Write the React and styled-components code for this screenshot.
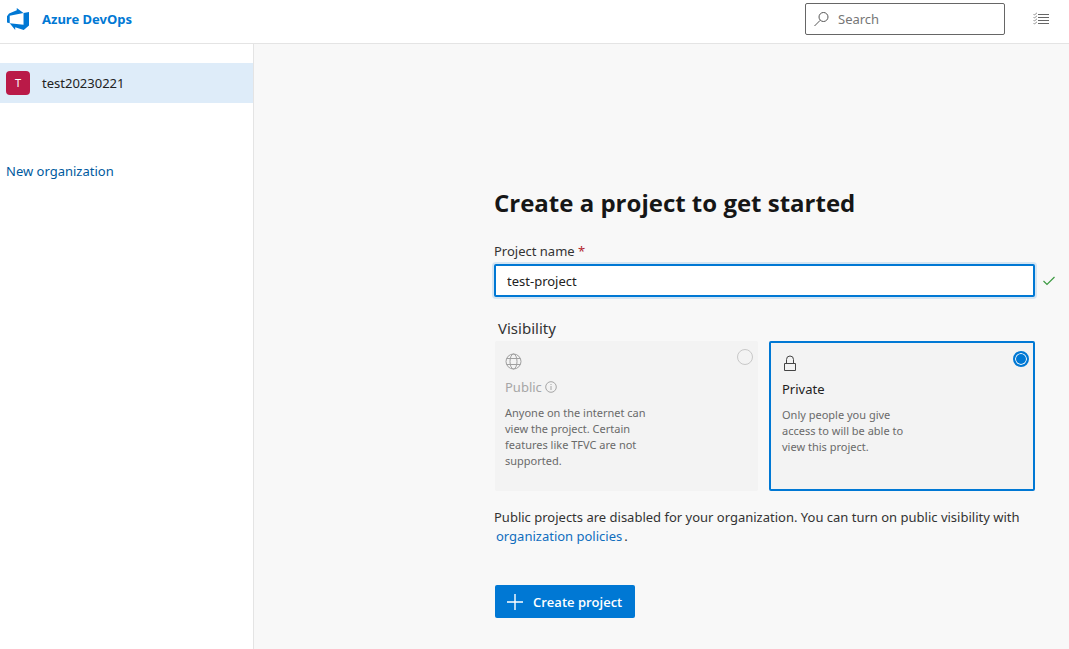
import React, { useState } from "react";
import styled, { createGlobalStyle } from "styled-components";

const GlobalStyle = createGlobalStyle`
  *, *::before, *::after { box-sizing: border-box; }
  body {
    margin: 0;
    background: #f8f8f8;
    color: #222;
    font-family: "Noto Sans", "Open Sans", sans-serif;
    font-size: 13px;
    line-height: 20px;
  }
  input, button { font: inherit; color: inherit; }
  svg { display: block; flex: none; }
`;

const Page = styled.div`
  display: flex;
  flex-direction: column;
  min-height: 100vh;
`;

const Header = styled.header`
  display: flex;
  align-items: center;
  height: 44px;
  padding: 0 19px 5px 7px;
  background: #fff;
  border-bottom: 1px solid #e4e4e4;
`;

const Brand = styled.a`
  display: flex;
  align-items: center;
  gap: 13px;
  margin-right: auto;
  color: #0078d4;
  font-weight: 700;
  text-decoration: none;
`;

const SearchBox = styled.label`
  display: flex;
  align-items: center;
  gap: 8px;
  width: 200px;
  height: 32px;
  margin-right: 28px;
  padding: 0 8px;
  border: 1px solid #666;
  border-radius: 2px;
  background: #fff;
`;

const SearchInput = styled.input`
  flex: 1;
  min-width: 0;
  padding: 0;
  border: 0;
  outline: 0;
  background: none;
  &::placeholder { color: #767676; opacity: 1; }
`;

const IconButton = styled.button`
  padding: 0;
  border: 0;
  background: none;
  color: #666;
`;

const Body = styled.div`
  display: flex;
  flex: 1;
`;

const Sidebar = styled.nav`
  flex: none;
  width: 254px;
  padding-top: 19px;
  background: #fff;
  border-right: 1px solid #e4e4e4;
`;

const OrgLink = styled.a`
  display: flex;
  align-items: center;
  gap: 12px;
  height: 40px;
  padding: 0 6px;
  background: #deecf9;
  color: #222;
  text-decoration: none;
`;

const OrgBadge = styled.span`
  width: 24px;
  height: 24px;
  border-radius: 4px;
  background: #ba1a48;
  color: #fff;
  font-size: 11px;
  line-height: 24px;
  text-align: center;
`;

const NewOrgLink = styled.a`
  display: block;
  margin-top: 58px;
  padding: 0 6px;
  color: #005a9e;
  text-decoration: none;
`;

const Main = styled.main`
  flex: 1;
  padding: 139px 14px 32px 240px;
`;

const Form = styled.form`
  display: flex;
  flex-direction: column;
`;

const Title = styled.h1`
  margin: 0;
  color: #161616;
  font-family: "Open Sans", sans-serif;
  font-size: 24px;
  line-height: 40px;
  font-weight: 700;
`;

const FieldLabel = styled.label`
  margin: 18px 0 3px;
  color: #333;
`;

const Required = styled.span`
  color: #b3262e;
`;

const FieldRow = styled.div`
  display: flex;
  align-items: center;
  gap: 8px;
`;

const TextInput = styled.input`
  flex: 1;
  min-width: 0;
  height: 33px;
  padding: 0 11px;
  border: 2px solid #0078d4;
  border-radius: 2px;
  outline: 0;
  box-shadow: 0 0 0 2px #d5e5f2;
  background: #fff;
`;

const Visibility = styled.fieldset`
  display: grid;
  grid-template-columns: 263fr 266fr;
  gap: 11px;
  margin: 18px 20px 0 0;
  padding: 0 0 0 1px;
  border: 0;
  min-width: 0;
`;

const Legend = styled.legend`
  padding: 0 3px;
  color: #333;
  font-size: 15px;
  line-height: 26px;
`;

const Card = styled.label`
  display: flex;
  justify-content: space-between;
  align-items: flex-start;
  min-height: 150px;
  padding: ${(p) => (p.$selected ? "8px 4px 8px 11px" : "8px 5px 8px 10px")};
  border: ${(p) => (p.$selected ? "2px solid #0078d4" : "0")};
  border-radius: 2px;
  background: #f3f3f3;
`;

const CardText = styled.span`
  display: flex;
  flex-direction: column;
`;

const CardIcon = styled.span`
  display: flex;
  align-items: center;
  height: 24px;
  color: ${(p) => (p.$muted ? "#a0a0a0" : "#444")};
`;

const CardName = styled.span`
  display: flex;
  align-items: center;
  gap: 3px;
  margin: 4px 0 8px;
  color: ${(p) => (p.$muted ? "#a6a6a6" : "#222")};
`;

const CardHint = styled.span`
  width: ${(p) => p.$width};
  color: #6a6a6a;
  font-size: 11px;
  line-height: 16px;
`;

const Radio = styled.input`
  appearance: none;
  flex: none;
  width: 16px;
  height: 16px;
  margin: 0;
  border: 1px solid #c8c8c8;
  border-radius: 50%;
  &:checked {
    border: 2px solid #0078d4;
    background: #0078d4;
    box-shadow: inset 0 0 0 1px #fff;
  }
`;

const Note = styled.p`
  margin: 17px 0 0;
  color: #333;
  line-height: 19px;
`;

const NoteLink = styled.a`
  padding: 0 2px;
  color: #106ebe;
  text-decoration: none;
`;

const CreateButton = styled.button`
  display: flex;
  align-items: center;
  align-self: flex-start;
  gap: 10px;
  height: 33px;
  margin: 39px 0 0 1px;
  padding: 0 13px 0 12px;
  border: 0;
  border-radius: 2px;
  background: #0078d4;
  color: #fff;
  font-family: "Open Sans", sans-serif;
  font-weight: 600;
`;

const line = { fill: "none", stroke: "currentColor" };

const Logo = () => (
  <svg width="22" height="22" viewBox="0 0 24 24" fill="#0078d4" aria-hidden="true">
    <path d="M0 8.877L2.247 5.91l8.405-3.416V.022l7.37 5.393L2.966 8.338v8.225L0 15.707zm24-4.45v14.651l-5.753 4.9-9.303-3.057v3.056l-5.978-7.416 15.057 1.798V5.415z" />
  </svg>
);

const SearchIcon = () => (
  <svg width="16" height="16" viewBox="0 0 16 16" {...line} stroke="#555" aria-hidden="true">
    <circle cx="9.500" cy="6" r="4.500" />
    <path d="M6.200 9.300L.5 15" />
  </svg>
);

const ListIcon = () => (
  <svg width="17" height="14" viewBox="0 0 17 14" {...line} aria-hidden="true">
    <path d="M5 2.500h11M5 5.500h11M5 8.500h11M5 11.500h11" />
    <path
      d="M.5 2l1 1L4 .8M.5 5l1 1L4 3.800M.5 8l1 1L4 6.800M.5 11l1 1L4 9.800"
      strokeWidth=".7"
    />
  </svg>
);

const CheckIcon = () => (
  <svg width="12" height="10" viewBox="0 0 12 10" {...line} stroke="#3c9a42" strokeWidth="1.200" aria-label="Name is available">
    <path d="M.5 5L4 8.500 11.500 1" />
  </svg>
);

const GlobeIcon = () => (
  <svg width="17" height="17" viewBox="0 0 17 17" {...line} aria-hidden="true">
    <circle cx="8.500" cy="8.500" r="7.500" />
    <ellipse cx="8.500" cy="8.500" rx="3.500" ry="7.500" />
    <path d="M1.500 5.500h14M1.500 11.500h14" />
  </svg>
);

const LockIcon = () => (
  <svg width="16" height="17" viewBox="0 0 16 17" {...line} aria-hidden="true">
    <path d="M2.500 8.500h11v7h-11zM4.500 8.500V4.500a3.500 3.500 0 0 1 7 0v4" />
  </svg>
);

const InfoIcon = () => (
  <svg width="12" height="12" viewBox="0 0 12 12" {...line} aria-hidden="true">
    <circle cx="6" cy="6" r="5.300" />
    <path d="M6 5v4M6 3v1" />
  </svg>
);

const PlusIcon = () => (
  <svg width="16" height="16" viewBox="0 0 16 16" {...line} strokeWidth="1.400" aria-hidden="true">
    <path d="M8 0v16M0 8h16" />
  </svg>
);

export default function App() {
  const [name, setName] = useState("test-project");
  return (
    <Page>
      <GlobalStyle />
      <Header>
        <Brand href="#">
          <Logo />
          Azure DevOps
        </Brand>
        <SearchBox>
          <SearchIcon />
          <SearchInput type="search" placeholder="Search" aria-label="Search" />
        </SearchBox>
        <IconButton type="button" aria-label="Work items">
          <ListIcon />
        </IconButton>
      </Header>
      <Body>
        <Sidebar>
          <OrgLink href="#">
            <OrgBadge>T</OrgBadge>
            test20230221
          </OrgLink>
          <NewOrgLink href="#">New organization</NewOrgLink>
        </Sidebar>
        <Main>
          <Form onSubmit={(e) => e.preventDefault()}>
            <Title>Create a project to get started</Title>
            <FieldLabel htmlFor="project-name">
              Project name <Required>*</Required>
            </FieldLabel>
            <FieldRow>
              <TextInput id="project-name" value={name} onChange={(e) => setName(e.target.value)} />
              <CheckIcon />
            </FieldRow>
            <Visibility>
              <Legend>Visibility</Legend>
              <Card>
                <CardText>
                  <CardIcon $muted><GlobeIcon /></CardIcon>
                  <CardName $muted>Public <InfoIcon /></CardName>
                  <CardHint $width="150px">
                    Anyone on the internet can view the project. Certain features like TFVC are not supported.
                  </CardHint>
                </CardText>
                <Radio type="radio" name="visibility" value="public" disabled />
              </Card>
              <Card $selected>
                <CardText>
                  <CardIcon><LockIcon /></CardIcon>
                  <CardName>Private</CardName>
                  <CardHint $width="134px">
                    Only people you give access to will be able to view this project.
                  </CardHint>
                </CardText>
                <Radio type="radio" name="visibility" value="private" defaultChecked />
              </Card>
            </Visibility>
            <Note>
              Public projects are disabled for your organization. You can turn on public visibility with{" "}
              <NoteLink href="#">organization policies</NoteLink>.
            </Note>
            <CreateButton type="submit">
              <PlusIcon />
              Create project
            </CreateButton>
          </Form>
        </Main>
      </Body>
    </Page>
  );
}
